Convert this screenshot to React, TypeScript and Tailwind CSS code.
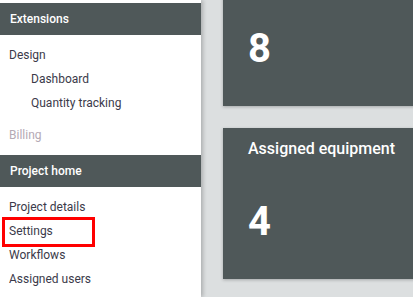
import React from "react";

const font = { fontFamily: "Roboto, 'Liberation Sans', sans-serif" };

function Header({ children }: { children: React.ReactNode }) {
  return (
    <div className="h-[32px] bg-[#4f5859] text-white text-[12px] font-medium flex items-center pl-[10px]">
      {children}
    </div>
  );
}

function Item({ children, indent, muted }: { children: React.ReactNode; indent?: boolean; muted?: boolean }) {
  return (
    <div
      className={`h-[24px] flex items-center text-[12px] ${indent ? "pl-[31px]" : "pl-[9px]"} ${
        muted ? "text-[#b5aab5]" : "text-[#3b3a4a]"
      }`}
    >
      {children}
    </div>
  );
}

function Card({ title, value }: { title: string; value: string }) {
  return (
    <div className="h-[151px] bg-[#4f5859] shadow-[0_1px_3px_rgba(0,0,0,0.25)] pl-[25px] pt-[11px] text-white">
      <div className="h-[20px] text-[16px] font-medium leading-[20px]">{title}</div>
      <div className="mt-[43px] text-[40px] font-bold leading-[40px]">{value}</div>
    </div>
  );
}

export default function App() {
  return (
    <div className="flex h-[297px] w-[413px] overflow-hidden bg-[#dcdfe0]" style={font}>
      <div className="relative z-10 w-[201px] shrink-0 bg-white pt-[3px] shadow-[2px_0_4px_rgba(0,0,0,0.22)]">
        <Header>Extensions</Header>
        <div className="py-[8px]">
          <Item>Design</Item>
          <Item indent>Dashboard</Item>
          <Item indent>Quantity tracking</Item>
        </div>
        <div className="pb-[8px]">
          <Item muted>Billing</Item>
        </div>
        <Header>Project home</Header>
        <div className="relative py-[8px]">
          <Item>Project details</Item>
          <Item>Settings</Item>
          <Item>Workflows</Item>
          <Item>Assigned users</Item>
          <span className="absolute left-[2px] top-[30px] h-[30px] w-[93px] border-[3px] border-[#ff0000]" />
        </div>
      </div>
      <div className="flex-1 pl-[22px] mt-[-45px] flex flex-col gap-[22px]">
        <div className="mr-[-20px]">
          <Card title="" value="8" />
        </div>
        <div className="mr-[-20px]">
          <Card title="Assigned equipment" value="4" />
        </div>
      </div>
    </div>
  );
}
